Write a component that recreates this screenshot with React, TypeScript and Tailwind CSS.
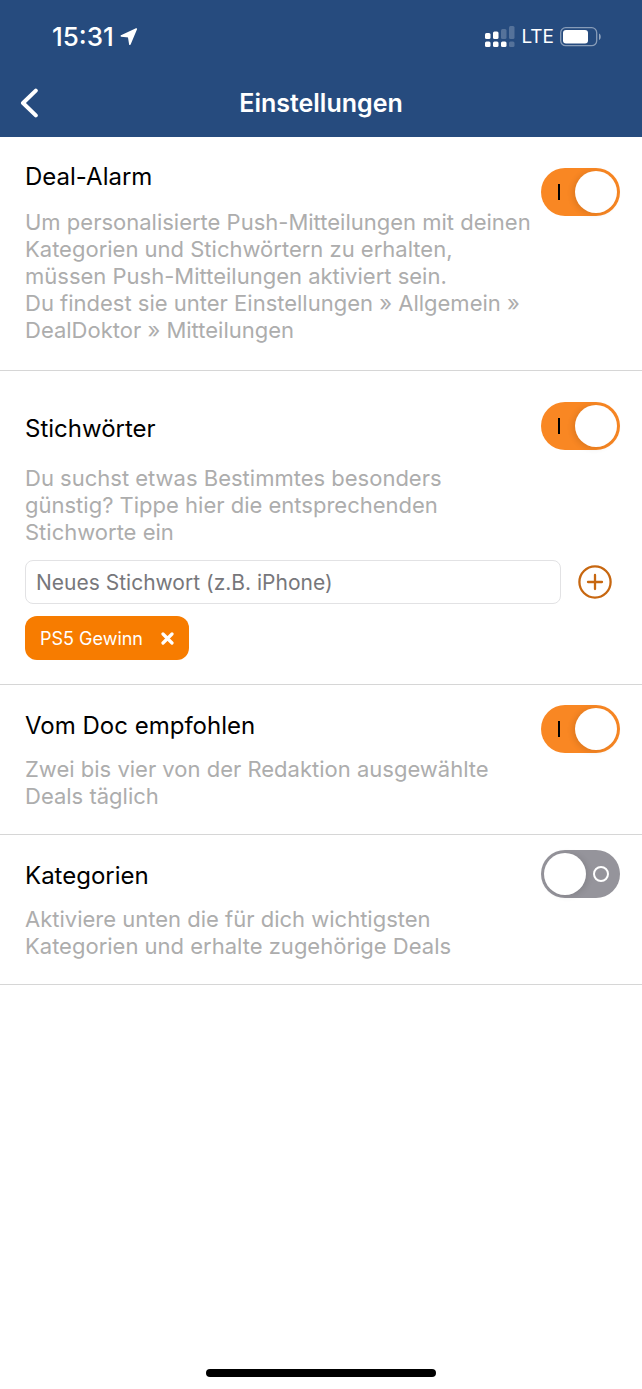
import { useState } from "react";
import type { FormEvent, ReactNode } from "react";

interface SwitchProps {
  id: string;
  checked: boolean;
  onChange: (checked: boolean) => void;
}

function Switch({ id, checked, onChange }: SwitchProps) {
  return (
    <span className="relative block h-12 w-[79px]">
      <input
        id={id}
        type="checkbox"
        role="switch"
        checked={checked}
        onChange={(e) => onChange(e.target.checked)}
        className="block h-12 w-full cursor-pointer appearance-none rounded-full bg-[#95949b] checked:bg-[#f98723]"
      />
      {/* Knob and on/off mark */}
      {checked ? (
        <>
          <span className="pointer-events-none absolute top-4 left-[17px] h-4 w-0.5 bg-black"></span>
          <span className="pointer-events-none absolute top-[3px] right-[3px] size-[42px] rounded-full bg-white shadow-[-2px_1px_6px_rgba(0,0,0,0.12)]"></span>
        </>
      ) : (
        <>
          <span className="pointer-events-none absolute top-4 right-[11px] size-4 rounded-full border-2 border-white"></span>
          <span className="pointer-events-none absolute top-[3px] left-[3px] size-[42px] rounded-full bg-white shadow-[2px_1px_6px_rgba(0,0,0,0.12)]"></span>
        </>
      )}
    </span>
  );
}

interface SettingProps {
  id: string;
  title: string;
  text: string;
  checked: boolean;
  onChange: (checked: boolean) => void;
  textClass: string;
  switchClass: string;
  children?: ReactNode;
}

function Setting({ id, title, text, checked, onChange, textClass, switchClass, children }: SettingProps) {
  return (
    <section className="border-b border-[#d6d6d6] pr-[22px] pl-[25px]">
      <div className="flex items-start justify-between">
        <div className={textClass}>
          <h2 className="text-[24px] leading-8 text-black">
            <label htmlFor={id}>{title}</label>
          </h2>
          <p className="text-[22px] leading-[27px] whitespace-pre-line text-[#adadad]">{text}</p>
        </div>
        <div className={switchClass}>
          <Switch id={id} checked={checked} onChange={onChange} />
        </div>
      </div>
      {children}
    </section>
  );
}

function StatusBar() {
  return (
    <div className="flex h-[74px] items-center justify-between pr-10 pl-[52px]">
      <div className="flex items-center gap-1.5">
        <span className="text-[26px] leading-8 font-medium">15:31</span>
        <svg width="18" height="18" viewBox="0 0 18 18" fill="currentColor" aria-hidden="true">
          <path
            d="M16.3 1 1.3 7.900 8.700 8.800 9.900 16.300Z"
            stroke="currentColor"
            strokeWidth="1.6"
            strokeLinejoin="round"
          />
        </svg>
      </div>
      <div className="flex items-center gap-1.5">
        <svg width="30" height="22" viewBox="0 0 30 22" fill="currentColor" aria-hidden="true">
          <rect x="0" y="7" width="5.5" height="6" rx="1.5" />
          <rect x="8" y="5.5" width="5.5" height="7.5" rx="1.5" />
          <rect x="16" y="3" width="5.5" height="10" rx="1.5" opacity="0.22" />
          <rect x="24" y="0" width="5.5" height="13" rx="1.5" opacity="0.22" />
          <rect x="0" y="15.5" width="5.5" height="5.5" rx="1.5" />
          <rect x="8" y="15.5" width="5.5" height="5.5" rx="1.5" />
          <rect x="16" y="15.5" width="5.5" height="5.5" rx="1.5" />
          <rect x="24" y="15.5" width="5.5" height="5.5" rx="1.5" opacity="0.22" />
        </svg>
        <span className="text-[19px] leading-8">LTE</span>
        <svg width="42" height="20" viewBox="0 0 42 20" fill="none" aria-hidden="true">
          <rect x="0.7" y="0.7" width="36" height="18" rx="5" stroke="white" strokeOpacity="0.45" strokeWidth="1.3" />
          <rect x="3" y="3" width="25" height="13.5" rx="3" fill="white" />
          <path d="M39 6.5c2.3.8 2.3 5.6 0 6.5Z" fill="white" fillOpacity="0.5" />
        </svg>
      </div>
    </div>
  );
}

export default function App() {
  const [alarm, setAlarm] = useState(true);
  const [keywordsOn, setKeywordsOn] = useState(true);
  const [recommended, setRecommended] = useState(true);
  const [categories, setCategories] = useState(false);
  const [keywords, setKeywords] = useState(["PS5 Gewinn"]);
  const [draft, setDraft] = useState("");

  const addKeyword = (e: FormEvent) => {
    e.preventDefault();
    const word = draft.trim();
    if (word && !keywords.includes(word)) setKeywords([...keywords, word]);
    setDraft("");
  };

  return (
    <div className="flex min-h-screen flex-col bg-white font-['Inter','Liberation_Sans',sans-serif]">
      <header className="bg-[#264b7e] pb-[5px] text-white">
        <StatusBar />
        <div className="grid h-[58px] grid-cols-[64px_1fr_64px] items-center">
          <button type="button" aria-label="Zurück" className="flex h-full cursor-pointer items-center pl-5">
            <svg width="19" height="30" viewBox="0 0 19 30" fill="none" aria-hidden="true">
              <path d="M15.8 2.6 3 15l12.800 12.400" stroke="white" strokeWidth="4" strokeLinecap="round" strokeLinejoin="round" />
            </svg>
          </button>
          <h1 className="text-center text-[25px] leading-8 font-semibold">Einstellungen</h1>
        </div>
      </header>

      <main className="flex-1">
        <Setting
          id="alarm"
          title="Deal-Alarm"
          text={
            "Um personalisierte Push-Mitteilungen mit deinen\nKategorien und Stichwörtern zu erhalten,\nmüssen Push-Mitteilungen aktiviert sein.\nDu findest sie unter Einstellungen » Allgemein »\nDealDoktor » Mitteilungen"
          }
          checked={alarm}
          onChange={setAlarm}
          textClass="flex flex-col gap-4 pt-6 pb-[26px]"
          switchClass="pt-[31px]"
        />

        <Setting
          id="keywords"
          title="Stichwörter"
          text={"Du suchst etwas Bestimmtes besonders\ngünstig? Tippe hier die entsprechenden\nStichworte ein"}
          checked={keywordsOn}
          onChange={setKeywordsOn}
          textClass="flex flex-col gap-5 pt-[42px] pb-3.5"
          switchClass="pt-[31px]"
        >
          <form onSubmit={addKeyword} className="flex items-center gap-[17px] pr-2">
            <input
              type="text"
              aria-label="Neues Stichwort"
              placeholder="Neues Stichwort (z.B. iPhone)"
              value={draft}
              onChange={(e) => setDraft(e.target.value)}
              className="h-11 min-w-0 flex-1 rounded-lg border border-[#e2e2e4] bg-white px-2.5 text-[21px] text-black outline-none placeholder:text-[#77777b]"
            />
            <button type="submit" aria-label="Stichwort hinzufügen" className="cursor-pointer">
              <svg width="34" height="34" viewBox="0 0 34 34" fill="none" stroke="#c76710" strokeWidth="2.3" aria-hidden="true">
                <circle cx="17" cy="17" r="15.6" />
                <path d="M17 10v14M10 17h14" strokeLinecap="round" />
              </svg>
            </button>
          </form>

          <ul className="flex flex-wrap gap-2 pt-3 pb-6">
            {keywords.map((word) => (
              <li key={word} className="flex h-11 items-center gap-[18px] rounded-xl bg-[#f77c00] px-[15px] text-[18px] text-white">
                <span>{word}</span>
                <button
                  type="button"
                  aria-label={`${word} entfernen`}
                  onClick={() => setKeywords(keywords.filter((k) => k !== word))}
                  className="cursor-pointer"
                >
                  <svg width="13" height="13" viewBox="0 0 13 13" fill="none" aria-hidden="true">
                    <path d="M2 2l9 9M11 2l-9 9" stroke="white" strokeWidth="3.2" strokeLinecap="round" />
                  </svg>
                </button>
              </li>
            ))}
          </ul>
        </Setting>

        <Setting
          id="recommended"
          title="Vom Doc empfohlen"
          text={"Zwei bis vier von der Redaktion ausgewählte\nDeals täglich"}
          checked={recommended}
          onChange={setRecommended}
          textClass="flex flex-col gap-3.5 pt-[25px] pb-6"
          switchClass="pt-5"
        />

        <Setting
          id="categories"
          title="Kategorien"
          text={"Aktiviere unten die für dich wichtigsten\nKategorien und erhalte zugehörige Deals"}
          checked={categories}
          onChange={setCategories}
          textClass="flex flex-col gap-3.5 pt-[25px] pb-6"
          switchClass="pt-[15px]"
        />
      </main>

      {/* Home indicator */}
      <footer className="flex justify-center pb-3">
        <div className="h-2 w-[230px] rounded-full bg-black"></div>
      </footer>
    </div>
  );
}
